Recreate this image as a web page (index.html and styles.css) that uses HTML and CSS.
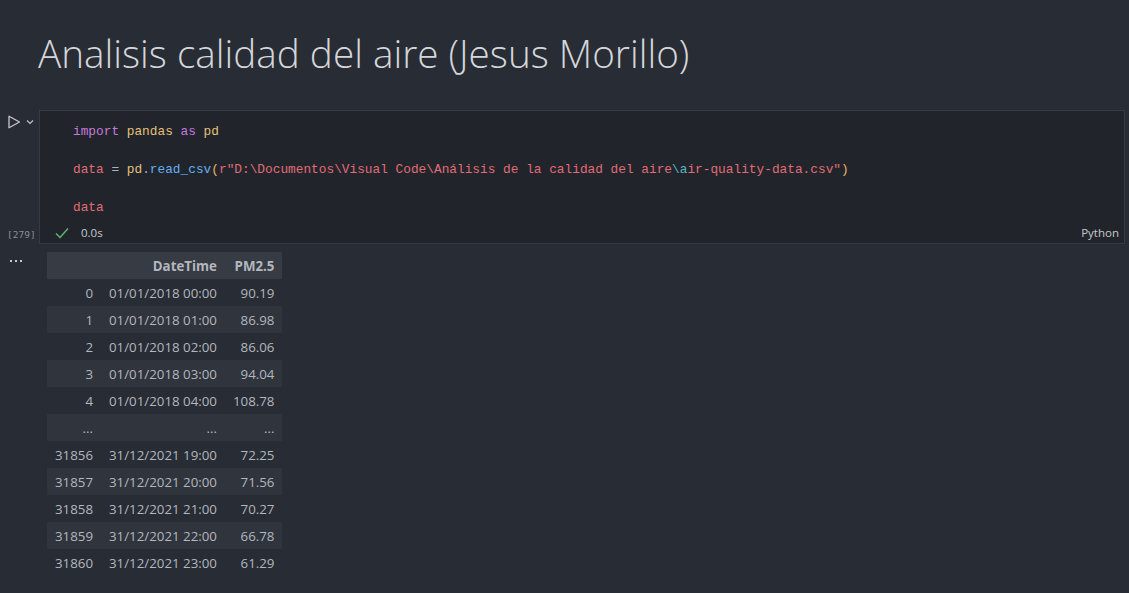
FILE: index.html
```html
<!DOCTYPE html>
<html lang="es">
<head>
<meta charset="utf-8">
<title>Analisis calidad del aire</title>
<link rel="stylesheet" href="styles.css">
</head>
<body>
<div class="notebook">
  <div class="md-cell">
    <h1 class="title">Analisis calidad del aire (Jesus Morillo)</h1>
  </div>

  <div class="code-cell">
    <div class="gutter">
      <div class="run-row">
        <svg class="run-icon" width="14" height="14" viewBox="0 0 14 14"><path d="M2 1.2 L12.5 7 L2 12.8 Z" fill="none" stroke="#c5c8ce" stroke-width="1.3" stroke-linejoin="round"/></svg>
        <svg class="chev-icon" width="8" height="6" viewBox="0 0 8 6"><path d="M1 1.5 L4 4.5 L7 1.5" fill="none" stroke="#c5c8ce" stroke-width="1.1"/></svg>
      </div>
      <div class="exec-count">[279]</div>
    </div>
    <div class="editor">
      <pre class="code"><span class="kw">import</span> <span class="mod">pandas</span> <span class="kw">as</span> <span class="mod">pd</span>

<span class="var">data</span> <span class="op">=</span> <span class="mod">pd</span><span class="op">.</span><span class="fn">read_csv</span><span class="br">(</span><span class="str">r"D:\Documentos\Visual Code\Análisis de la calidad del aire</span><span class="esc">\a</span><span class="str">ir-quality-data.csv"</span><span class="br">)</span>

<span class="var">data</span></pre>
      <div class="status">
        <svg class="check" width="14" height="12" viewBox="0 0 14 12"><path d="M1 6.5 L5 10.5 L13 1.5" fill="none" stroke="#5fb773" stroke-width="1.4"/></svg>
        <span class="time">0.0s</span>
        <span class="lang">Python</span>
      </div>
    </div>
  </div>

  <div class="output">
    <div class="out-gutter"><span class="dot"></span><span class="dot"></span><span class="dot"></span></div>
    <table class="df">
      <thead>
        <tr><th></th><th>DateTime</th><th>PM2.5</th></tr>
      </thead>
      <tbody>
        <tr><td>0</td><td>01/01/2018 00:00</td><td>90.19</td></tr>
        <tr><td>1</td><td>01/01/2018 01:00</td><td>86.98</td></tr>
        <tr><td>2</td><td>01/01/2018 02:00</td><td>86.06</td></tr>
        <tr><td>3</td><td>01/01/2018 03:00</td><td>94.04</td></tr>
        <tr><td>4</td><td>01/01/2018 04:00</td><td>108.78</td></tr>
        <tr><td>...</td><td>...</td><td>...</td></tr>
        <tr><td>31856</td><td>31/12/2021 19:00</td><td>72.25</td></tr>
        <tr><td>31857</td><td>31/12/2021 20:00</td><td>71.56</td></tr>
        <tr><td>31858</td><td>31/12/2021 21:00</td><td>70.27</td></tr>
        <tr><td>31859</td><td>31/12/2021 22:00</td><td>66.78</td></tr>
        <tr><td>31860</td><td>31/12/2021 23:00</td><td>61.29</td></tr>
      </tbody>
    </table>
  </div>
</div>
</body>
</html>
```

FILE: styles.css
```css
html, body {
  margin: 0;
  padding: 0;
  background: #282c34;
  height: 100%;
  overflow: hidden;
}

.notebook {
  font-family: "Open Sans", "Noto Sans", sans-serif;
  color: #c5c8ce;
}

.md-cell {
  padding: 28px 0 0 38px;
  height: 82px;
  box-sizing: border-box;
}

.title {
  margin: 0;
  font-size: 38.7px;
  font-weight: 300;
  line-height: 50px;
  color: #d4d6da;
}

.code-cell {
  display: flex;
  margin-top: 28px;
  padding-right: 4px;
}

.gutter {
  width: 39px;
  flex: none;
  display: flex;
  flex-direction: column;
  justify-content: space-between;
}

.run-row {
  display: flex;
  align-items: center;
  gap: 5px;
  padding: 5px 0 0 7px;
}

.exec-count {
  font-family: "DejaVu Sans Mono", monospace;
  font-size: 9.5px;
  color: #8a8e96;
  padding: 0 0 4px 7px;
}

.editor {
  flex: 1;
  background: #21252b;
  border: 1px solid #353a43;
}

.code {
  margin: 0;
  padding: 11px 0 6px 33px;
  font-family: "Liberation Mono", "DejaVu Sans Mono", monospace;
  font-size: 12.8px;
  line-height: 19px;
  color: #abb2bf;
}

.kw { color: #c678dd; }
.mod { color: #e5c07b; }
.var { color: #e06c75; }
.op { color: #abb2bf; }
.fn { color: #61afef; }
.br { color: #e5b567; }
.str { color: #e06c75; }
.esc { color: #56b6c2; }

.status {
  display: flex;
  align-items: center;
  height: 19px;
  padding: 0 5px 1px 15px;
  font-size: 11.5px;
  color: #c5c8ce;
}

.check {
  margin-right: 12px;
}

.lang {
  margin-left: auto;
}

.output {
  display: flex;
  margin-top: 8px;
}

.out-gutter {
  width: 47px;
  flex: none;
  padding: 8px 0 0 10px;
  box-sizing: border-box;
  display: flex;
  align-items: flex-start;
  gap: 3px;
}

.dot {
  width: 2px;
  height: 2px;
  background: #c5c8ce;
}

.df {
  border-collapse: collapse;
  font-size: 13.3px;
  color: #b3b7bf;
}

.df th,
.df td {
  height: 27px;
  padding: 0 8px;
  text-align: right;
  white-space: nowrap;
}

.df th {
  background: #373b44;
  font-weight: 700;
}

.df tbody tr:nth-child(even) td {
  background: #30343c;
}
```
